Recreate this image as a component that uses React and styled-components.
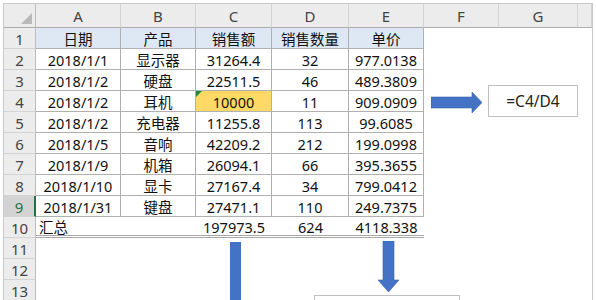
import React from "react";
import styled, { createGlobalStyle } from "styled-components";

const GlobalStyle = createGlobalStyle`
  html, body {
    margin: 0;
    padding: 0;
    background: #ffffff;
  }
  body {
    font-family: "Noto Sans", "Noto Sans CJK SC", sans-serif;
  }
`;

const COLS = ["A", "B", "C", "D", "E", "F", "G", ""];

const ROWS = [
  ["日期", "产品", "销售额", "销售数量", "单价"],
  ["2018/1/1", "显示器", "31264.4", "32", "977.0138"],
  ["2018/1/2", "硬盘", "22511.5", "46", "489.3809"],
  ["2018/1/2", "耳机", "10000", "11", "909.0909"],
  ["2018/1/2", "充电器", "11255.8", "113", "99.6085"],
  ["2018/1/5", "音响", "42209.2", "212", "199.0998"],
  ["2018/1/9", "机箱", "26094.1", "66", "395.3655"],
  ["2018/1/10", "显卡", "27167.4", "34", "799.0412"],
  ["2018/1/31", "键盘", "27471.1", "110", "249.7375"],
  ["汇总", "", "197973.5", "624", "4118.338"],
];

const Page = styled.div`
  position: relative;
  width: 596px;
  height: 300px;
  overflow: hidden;
  padding: 3px 0 0 3px;
  box-sizing: border-box;
`;

const Sheet = styled.div`
  display: grid;
  grid-template-columns: 32px 85px 75px 76px 77px 75px 75px 79px 14px;
  grid-template-rows: 24px repeat(13, 21px);
  width: 590px;
  border-top: 1px solid #c8c8c8;
  border-left: 1px solid #c8c8c8;
  border-right: 1px solid #c8c8c8;
  box-sizing: border-box;
  font-size: 14.5px;
  line-height: 1;
  color: #111;
`;

const Corner = styled.div`
  position: relative;
  background: #ececec;
  border-right: 1px solid #bcbcbc;
  border-bottom: 1px solid #ababab;
  box-sizing: border-box;

  &::after {
    content: "";
    position: absolute;
    right: 3px;
    bottom: 3px;
    border-left: 11px solid transparent;
    border-bottom: 11px solid #b8b8b8;
  }
`;

const ColHead = styled.div`
  display: flex;
  align-items: center;
  justify-content: center;
  padding-top: 2px;
  background: #ececec;
  border-right: 1px solid #d4d4d4;
  border-bottom: 1px solid #ababab;
  box-sizing: border-box;
  color: #444;
  font-size: 15px;
`;

const RowHead = styled.div`
  display: flex;
  align-items: center;
  justify-content: center;
  padding-top: 2px;
  background: ${(p) => (p.$active ? "#d3d3d3" : "#ececec")};
  border-right: ${(p) => (p.$active ? "2px solid #217346" : "1px solid #bcbcbc")};
  border-bottom: 1px solid #d4d4d4;
  box-sizing: border-box;
  color: ${(p) => (p.$active ? "#217346" : "#444")};
  font-size: 15px;
`;

const Cell = styled.div`
  position: relative;
  display: flex;
  align-items: center;
  justify-content: ${(p) => (p.$left ? "flex-start" : "center")};
  padding: 2px 0 0 ${(p) => (p.$left ? "3px" : "0")};
  box-sizing: border-box;
  white-space: nowrap;
  background: ${(p) => p.$fill || "transparent"};
  border-right: ${(p) => (p.$grid ? "1px solid #b0b0b0" : "none")};
  border-bottom: ${(p) =>
    p.$total ? "3px double #a8a8a8" : p.$grid ? "1px solid #b0b0b0" : "none"};
`;

const ErrorMark = styled.span`
  position: absolute;
  left: 0;
  top: 0;
  border-top: 6px solid #1e8a3e;
  border-right: 6px solid transparent;
`;

const Floating = styled.div`
  position: absolute;
  left: ${(p) => p.$x}px;
  top: ${(p) => p.$y}px;
  width: ${(p) => p.$w}px;
  height: ${(p) => p.$h}px;
`;

const FormulaBox = styled(Floating)`
  display: flex;
  align-items: center;
  justify-content: center;
  background: #fff;
  border: 1px solid #bfbfbf;
  box-sizing: border-box;
  font-size: 15.5px;
  color: #222;
`;

const ArrowRight = () => (
  <svg width="51" height="21" viewBox="0 0 51 21">
    <polygon
      points="0,5 41,5 41,0 51,10.5 41,21 41,16 0,16"
      fill="#4472c4"
      stroke="#3a62ad"
      strokeWidth="0.6"
    />
  </svg>
);

const ArrowDown = ({ head }) =>
  head ? (
    <svg width="21" height="51" viewBox="0 0 21 51">
      <polygon
        points="5,0 16,0 16,39 21,39 10.5,51 0,39 5,39"
        fill="#4472c4"
        stroke="#3a62ad"
        strokeWidth="0.6"
      />
    </svg>
  ) : (
    <svg width="11" height="60" viewBox="0 0 11 60">
      <rect x="0" y="0" width="11" height="60" fill="#4472c4" />
    </svg>
  );

const App = () => {
  const cells = [];
  for (let r = 1; r <= 13; r++) {
    cells.push(
      <RowHead key={`h${r}`} $active={r === 9}>
        {r}
      </RowHead>
    );
    for (let c = 0; c < 8; c++) {
      const row = ROWS[r - 1];
      const value = row && c < 5 ? row[c] : "";
      const inTable = r <= 9 && c < 5;
      const isTotal = r === 10 && c < 5;
      let fill;
      if (r === 1 && c < 5) fill = "#dde8f4";
      if (r === 4 && c === 2) fill = "#ffd966";
      cells.push(
        <Cell
          key={`${r}-${c}`}
          $grid={inTable}
          $total={isTotal}
          $fill={fill}
          $left={r === 10 && c === 0}
        >
          {r === 4 && c === 2 && <ErrorMark />}
          {value}
        </Cell>
      );
    }
  }

  return (
    <>
      <GlobalStyle />
      <Page>
        <Sheet>
          <Corner />
          {COLS.map((c, i) => (
            <ColHead key={i}>{c}</ColHead>
          ))}
          {cells}
        </Sheet>

        {/* floating shapes drawn over the sheet */}
        <Floating $x={431} $y={92} $w={51} $h={21}>
          <ArrowRight />
        </Floating>
        <FormulaBox $x={488} $y={85} $w={90} $h={32}>
          =C4/D4
        </FormulaBox>

        <Floating $x={230} $y={242} $w={11} $h={60}>
          <ArrowDown />
        </Floating>
        <Floating $x={378} $y={241} $w={21} $h={51}>
          <ArrowDown head />
        </Floating>
        <FormulaBox $x={314} $y={295} $w={146} $h={20} />
      </Page>
    </>
  );
};

export default App;
